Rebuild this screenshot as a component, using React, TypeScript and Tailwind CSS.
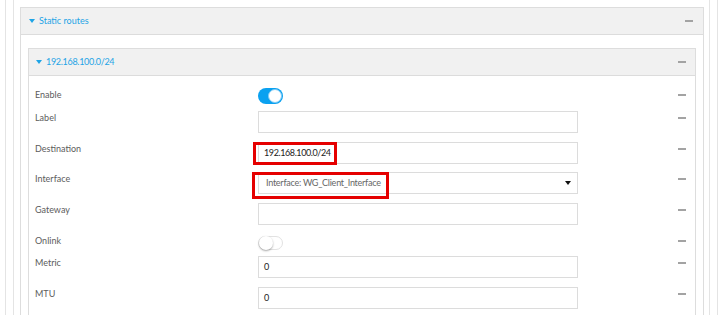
type Row = {
  label: string;
  kind: "toggle" | "input" | "select";
  value?: string;
  on?: boolean;
  mark?: "dest" | "iface";
  gap: string;
};

const rows: Row[] = [
  { label: "Enable", kind: "toggle", on: true, gap: "mt-0" },
  { label: "Label", kind: "input", gap: "mt-[7px]" },
  { label: "Destination", kind: "input", value: "192.168.100.0/24", mark: "dest", gap: "mt-[9px]" },
  { label: "Interface", kind: "select", value: "Interface: WG_Client_Interface", mark: "iface", gap: "mt-[8px]" },
  { label: "Gateway", kind: "input", gap: "mt-[9px]" },
  { label: "Onlink", kind: "toggle", on: false, gap: "mt-[9px]" },
  { label: "Metric", kind: "input", value: "0", gap: "mt-[6px]" },
  { label: "MTU", kind: "input", value: "0", gap: "mt-[9px]" },
];

function Dash() {
  return <div className="h-[2px] w-[8px] bg-[#a3a3a3]" />;
}

function Caret() {
  return (
    <svg width="6" height="4" viewBox="0 0 6 4" className="shrink-0">
      <path d="M0 0 L6 0 L3 4 Z" fill="#1ea4e6" />
    </svg>
  );
}

function Toggle({ on }: { on?: boolean }) {
  if (on) {
    return (
      <div className="flex h-[16px] w-[25px] items-center justify-end rounded-full bg-[#0aa1f0] pr-[1px]">
        <div className="h-[14px] w-[14px] rounded-full border border-[#7fcaf5] bg-white" />
      </div>
    );
  }
  return (
    <div className="mt-[2px] flex h-[14px] w-[25px] items-center rounded-full border border-[#e2e2e2] bg-white">
      <div className="h-[14px] w-[14px] rounded-full bg-white shadow-[0_1px_2px_rgba(0,0,0,0.35)]" />
    </div>
  );
}

function Control({ row }: { row: Row }) {
  if (row.kind === "toggle") return <Toggle on={row.on} />;
  return (
    <div className="relative">
      <div className="flex h-[22px] w-[320px] items-center border border-[#dcdcdc] pl-[5px] pr-[5px]">
        <span
          className={
            row.kind === "select"
              ? "pl-[2px] text-[9px] tracking-[-0.25px] text-[#666]"
              : "text-[9px] tracking-[-0.4px] text-[#222]"
          }
        >
          {row.value}
        </span>
        {row.kind === "select" ? (
          <svg width="6" height="4" viewBox="0 0 6 4" className="ml-auto mr-[1px]">
            <path d="M0 0 L6 0 L3 4 Z" fill="#111" />
          </svg>
        ) : null}
      </div>
      {row.mark === "dest" ? (
        <div className="absolute left-[-5px] top-0 h-[23px] w-[84px] border-[3px] border-[#e50000]" />
      ) : null}
      {row.mark === "iface" ? (
        <div className="absolute left-[-6px] top-0 h-[27px] w-[137px] border-[3px] border-[#e50000]" />
      ) : null}
    </div>
  );
}

export default function App() {
  return (
    <div className="h-[328px] w-[722px] overflow-hidden bg-white font-['Lato',sans-serif]">
      <div className="h-[315px] overflow-hidden pl-[5px] pr-[4px]">
        <div className="h-full border-x border-[#e4e4e4] px-[7px]">
          <div className="h-full border-x border-[#e4e4e4] pl-[6px] pr-[5px] pt-[7px]">
            <section className="h-[400px] border border-[#dddddd]">
              <div className="flex h-[27px] items-center border-b border-[#dcdcdc] bg-[#f1f1f1] pl-[8px] pr-[10px]">
                <Caret />
                <span className="ml-[4px] text-[9px] text-[#1ea4e6]">Static routes</span>
                <div className="ml-auto">
                  <Dash />
                </div>
              </div>

              <div className="px-[7px] pt-[13px]">
                <section className="h-[400px] border border-[#dddddd]">
                  <div className="flex h-[27px] items-center border-b border-[#dcdcdc] bg-[#f1f1f1] pl-[7px] pr-[9px]">
                    <Caret />
                    <span className="ml-[4px] text-[9px] tracking-[-0.3px] text-[#1ea4e6]">
                      192.168.100.0/24
                    </span>
                    <div className="ml-auto">
                      <Dash />
                    </div>
                  </div>

                  <div className="flex flex-col pl-[6px] pr-[9px] pt-[12px]">
                    {rows.map((row) => (
                      <div key={row.label} className={`flex items-start ${row.gap}`}>
                        <div className="w-[223px] text-[9px] leading-[13px] text-[#5c5c5c]">
                          {row.label}
                        </div>
                        <div className="w-[320px]">
                          <Control row={row} />
                        </div>
                        <div className="ml-auto flex h-[13px] items-center">
                          <Dash />
                        </div>
                      </div>
                    ))}
                  </div>
                </section>
              </div>
            </section>
          </div>
        </div>
      </div>
    </div>
  );
}
